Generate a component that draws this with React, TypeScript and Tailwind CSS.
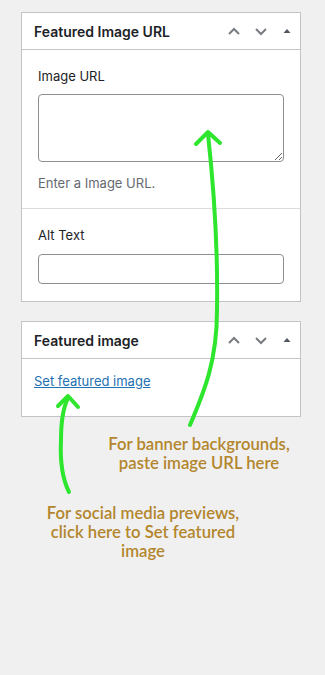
import { ReactNode } from "react"

const Chevron = ({ up }: { up?: boolean }) => (
    <svg width="14" height="14" viewBox="0 0 14 14" className="text-[#787c82]">
        <path
            d={up ? "M2 10 L7 5 L12 10" : "M2 5 L7 10 L12 5"}
            fill="none"
            stroke="currentColor"
            strokeWidth="2"
        />
    </svg>
)

const PanelHeader = ({ title }: { title: string }) => (
    <div className="h-[37px] flex items-center justify-between pl-3 pr-[8px] border-b border-[#c3c4c7]">
        <h2 className="text-[14px] font-semibold text-[#1d2327]">{title}</h2>
        <div className="flex items-center gap-[13px]">
            <Chevron up />
            <Chevron />
            <svg width="10" height="10" viewBox="0 0 10 10" className="ml-[1px]">
                <path d="M1.5 7 L5 3 L8.5 7 Z" fill="#50575e" />
            </svg>
        </div>
    </div>
)

const Panel = ({ title, children }: { title: string; children: ReactNode }) => (
    <section className="w-[280px] bg-white border border-[#c3c4c7]">
        <PanelHeader title={title} />
        {children}
    </section>
)

export default function App() {
    return (
        <main
            className="relative w-[325px] h-[675px] bg-[#f0f0f1] pt-3 pl-[21px] flex flex-col"
            style={{ fontFamily: "Inter, 'Liberation Sans', sans-serif" }}
        >
            {/* featured image url */}
            <Panel title="Featured Image URL">
                <div className="px-4 pt-[16px] pb-[15px] border-b border-[#dcdcde]">
                    <label className="block text-[13px] text-[#1d2327] leading-5">Image URL</label>
                    <textarea className="mt-[8px] block w-full h-[68px] rounded-[4px] border border-[#8c8f94] resize-y" />
                    <p className="mt-[11px] text-[13px] text-[#646970] leading-5">Enter a Image URL.</p>
                </div>
                <div className="px-4 pt-[16px] pb-[17px]">
                    <label className="block text-[13px] text-[#1d2327] leading-5">Alt Text</label>
                    <input className="mt-[9px] block w-full h-[30px] rounded-[4px] border border-[#8c8f94]" />
                </div>
            </Panel>

            <div className="h-[19px]" />

            {/* featured image */}
            <Panel title="Featured image">
                <div className="px-3 pt-[9px] pb-[24px]">
                    <a className="text-[13px] text-[#2271b1] underline leading-5">Set featured image</a>
                </div>
            </Panel>

            {/* annotations */}
            <div
                className="text-[#b3862c] text-[16.7px] font-semibold leading-[19px] text-center"
                style={{ fontFamily: "Lato, 'Open Sans', sans-serif" }}
            >
                <p className="ml-[78px] w-[200px] mt-[18px]">For banner backgrounds, paste image URL here</p>
                <p className="ml-[22px] w-[200px] mt-[31px]">For social media previews, click here to Set featured image</p>
            </div>

            {/* green arrows */}
            <svg className="absolute inset-0 pointer-events-none" width="325" height="675">
                <g fill="none" stroke="#2de62d" strokeWidth="4" strokeLinecap="round" strokeLinejoin="round">
                    <path d="M190 425 C 205 390, 217 360, 217 310 C 218 250, 213 180, 208 134" />
                    <path d="M196 144 L208 132 L220 143" />
                    <path d="M69 492 C 62 478, 60 460, 61 440 C 61 422, 63 408, 68 398" />
                    <path d="M58 406 L68 396 L78 407" />
                </g>
            </svg>
        </main>
    )
}
